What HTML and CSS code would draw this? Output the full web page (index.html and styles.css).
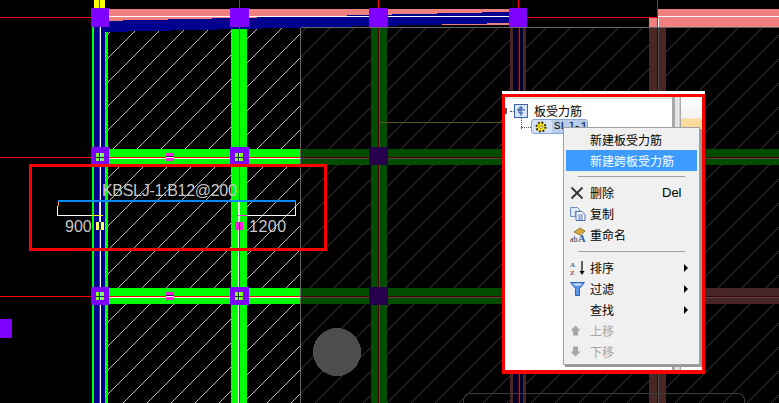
FILE: index.html
```html
<!DOCTYPE html>
<html lang="zh">
<head>
<meta charset="utf-8">
<title>板受力筋</title>
<link rel="stylesheet" href="styles.css">
</head>
<body>
<main class="stage">
  <svg class="cad" width="779" height="403" viewBox="0 0 779 403" xmlns="http://www.w3.org/2000/svg">
    <defs>
      <pattern id="hatch" patternUnits="userSpaceOnUse" x="-2" y="0" width="24" height="24">
        <line class="hatch-line" x1="0" y1="24" x2="24" y2="0"/>
      </pattern>
    </defs>
    <rect x="108" y="27" width="671" height="376" fill="url(#hatch)"/>

    <!-- rows -->
    <rect class="green" x="108" y="149" width="671" height="16"/>
    <rect class="green" x="108" y="288" width="402" height="16"/>
    <rect class="pink" x="510" y="288" width="269" height="16"/>

    <!-- columns -->
    <rect class="yellow" x="94" y="0" width="11" height="9"/>
    <rect class="green" x="92" y="27" width="2" height="376"/>
    <rect class="navy" x="94" y="27" width="11" height="376"/>
    <rect class="green" x="105" y="32" width="3" height="371"/>
    <rect class="green" x="231" y="27" width="16" height="376"/>
    <rect class="green" x="371" y="27" width="16" height="376"/>
    <rect class="pink" x="510" y="27" width="16" height="376"/>
    <rect class="navy" x="513" y="27" width="10" height="376"/>
    <rect class="pink" x="649" y="18" width="17" height="385"/>

    <!-- top band -->
    <rect class="pink" x="109" y="9" width="400" height="16"/>
    <polygon class="navy" points="105,20.900 509,11.900 509,23 105,32"/>
    <rect class="pink" x="657" y="9" width="122" height="18"/>

    <!-- axis lines -->
    <rect class="red" x="0" y="157" width="779" height="1"/>
    <rect class="white" x="108" y="158" width="671" height="1"/>
    <rect class="red" x="0" y="296" width="779" height="1"/>
    <rect class="white" x="108" y="297" width="671" height="1"/>
    <rect class="red" x="0" y="17" width="100" height="1"/>
    <rect class="red" x="527" y="17" width="131" height="1"/>
    <rect class="white" x="100" y="16" width="409" height="1"/>
    <rect class="white" x="657" y="16" width="122" height="1"/>
    <rect class="white" x="100" y="18" width="1" height="385"/>
    <rect class="red" x="99" y="0" width="1" height="403"/>
    <rect class="white" x="238" y="200" width="1" height="203"/>
    <rect class="red" x="239" y="0" width="1" height="403"/>
    <rect class="white" x="379" y="18" width="1" height="385"/>
    <rect class="red" x="378" y="0" width="1" height="403"/>
    <rect class="white" x="519" y="18" width="1" height="385"/>
    <rect class="red" x="518" y="0" width="1" height="403"/>
    <rect class="white" x="658" y="18" width="1" height="385"/>
    <rect class="red" x="657" y="0" width="1" height="403"/>

    <!-- nodes -->
    <rect class="purple" x="91" y="8" width="18" height="19"/>
    <rect class="purple" x="230" y="8" width="19" height="19"/>
    <rect class="purple" x="369" y="8" width="19" height="19"/>
    <rect class="purple" x="509" y="8" width="18" height="19"/>
    <rect class="purple" x="91" y="147" width="18" height="18"/>
    <rect class="purple" x="230" y="147" width="19" height="18"/>
    <rect class="purple" x="369" y="147" width="19" height="18"/>
    <rect class="purple" x="91" y="287" width="18" height="18"/>
    <rect class="purple" x="230" y="287" width="19" height="18"/>
    <rect class="purple" x="369" y="287" width="19" height="18"/>
    <rect class="purple" x="0" y="319" width="12" height="19"/>

    <g class="pin">
      <rect class="lime" x="96" y="153" width="8" height="8"/>
      <rect class="lime" x="235" y="153" width="8" height="8"/>
      <rect class="lime" x="96" y="292" width="8" height="8"/>
      <rect class="lime" x="235" y="292" width="8" height="8"/>
      <rect class="dark" x="99" y="153" width="1" height="8"/>
      <rect class="cyan" x="100" y="153" width="1" height="8"/>
      <rect class="dark" x="96" y="157" width="8" height="1"/>
      <rect class="dark" x="238" y="153" width="1" height="8"/>
      <rect class="cyan" x="239" y="153" width="1" height="8"/>
      <rect class="dark" x="235" y="157" width="8" height="1"/>
      <rect class="dark" x="99" y="292" width="1" height="8"/>
      <rect class="cyan" x="100" y="292" width="1" height="8"/>
      <rect class="dark" x="96" y="296" width="8" height="1"/>
      <rect class="dark" x="238" y="292" width="1" height="8"/>
      <rect class="cyan" x="239" y="292" width="1" height="8"/>
      <rect class="dark" x="235" y="296" width="8" height="1"/>
      <rect class="magenta" x="166" y="153" width="8" height="8"/>
      <rect class="magenta" x="166" y="292" width="8" height="8"/>
      <rect class="dark" x="166" y="156" width="8" height="1"/>
      <rect class="white" x="166" y="157" width="8" height="1"/>
      <rect class="dark" x="166" y="295" width="8" height="1"/>
      <rect class="white" x="166" y="296" width="8" height="1"/>
    </g>

    <!-- dimmed area -->
    <rect class="dim" x="300.5" y="27.5" width="500" height="400" rx="2"/>
    <rect class="olive" x="380" y="122" width="122" height="1"/>
    <circle class="disc" cx="337" cy="352" r="24"/>
    <rect class="ghost" x="463.5" y="393.5" width="281" height="30" rx="7"/>

    <!-- dimension -->
    <rect class="selection" x="30.5" y="165.5" width="295" height="84"/>
    <text class="dim-text tight" x="102" y="196">KBSLJ-1:B12@200</text>
    <rect class="wire" x="58" y="200" width="238" height="2"/>
    <rect class="orange" x="58" y="202" width="1" height="4"/>
    <rect class="orange" x="295" y="202" width="1" height="4"/>
    <rect class="white" x="57" y="206" width="1" height="10"/>
    <rect class="white" x="295" y="206" width="1" height="10"/>
    <rect class="white" x="57" y="215" width="40" height="1"/>
    <rect class="white" x="247" y="215" width="49" height="1"/>
    <rect class="yellow" x="92" y="215" width="11" height="1"/>
    <rect class="magenta" x="237" y="215" width="10" height="1"/>
    <rect class="cyan" x="99" y="202" width="1" height="20"/>
    <rect class="cyan" x="239" y="202" width="1" height="20"/>
    <rect class="yellow-pale" x="96" y="222" width="8" height="8"/>
    <rect class="dark" x="99" y="222" width="2" height="8"/>
    <rect class="magenta" x="235" y="222" width="8" height="8"/>
    <rect class="dark" x="239" y="222" width="1" height="8"/>
    <text class="dim-text" x="65" y="232">900</text>
    <text class="dim-text loose" x="249" y="232">1200</text>
  </svg>

  <section class="popup">
    <div class="frame">
      <div class="tree">
        <div class="node root">
          <span class="knob"></span>
          <span class="twig-h"></span>
          <svg class="tree-icon" width="14" height="14" viewBox="0 0 14 14">
            <rect x="0.5" y="0.5" width="13" height="13" fill="#d7e4f7" stroke="#3a62a8"/>
            <path d="M7 2v10M3 6h8M9 4H5v5h4" fill="none" stroke="#2a55a5"/>
          </svg>
          <span>板受力筋</span>
        </div>
        <span class="twig-v"></span>
        <div class="node child">
          <span class="twig-c"></span>
          <div class="pill">
            <svg class="gear" width="12" height="12" viewBox="0 0 12 12">
              <circle cx="6" cy="6" r="4.500" fill="#ffe600" stroke="#222" stroke-width="2" stroke-dasharray="1.800 1.730"/>
              <circle cx="6" cy="6" r="1.500" fill="#fff7a0" stroke="#554" stroke-width="0.600"/>
            </svg>
            <span class="pill-text">SLJ-1</span>
          </div>
        </div>
      </div>
      <div class="rail"></div>
      <div class="side"></div>
    </div>
  </section>

  <nav class="menu">
    <div class="item"><span class="ico"></span><span class="label">新建板受力筋</span></div>
    <div class="item active"><span class="ico"></span><span class="label">新建跨板受力筋</span></div>
    <div class="sep"></div>
    <div class="item">
      <span class="ico"><svg width="14" height="14" viewBox="0 0 14 14"><path d="M1.500 1.500l11 11M12.500 1.500l-11 11" fill="none" stroke="#333" stroke-width="1.800"/></svg></span>
      <span class="label">删除</span><span class="key">Del</span>
    </div>
    <div class="item">
      <span class="ico"><svg width="16" height="14" viewBox="0 0 16 14"><path d="M0.500 0.500h7l2 2v2h-4v5h-5z" fill="#dfe9f8" stroke="#6f8fc4"/><path d="M6 4.500h6l3 3v6H6z" fill="#fff" stroke="#4a6fb0"/><path d="M8 8h5M8 10h5M8 12h5" stroke="#4a6fb0"/></svg></span>
      <span class="label">复制</span>
    </div>
    <div class="item">
      <span class="ico"><svg width="16" height="16" viewBox="0 0 16 16"><path d="M4 5l6-4 5 3-5 4z" fill="#d9a93a" stroke="#8c7a45"/><text class="ab" x="0" y="15">ab</text><text class="big-a" x="8" y="15">A</text></svg></span>
      <span class="label">重命名</span>
    </div>
    <div class="sep wide"></div>
    <div class="item">
      <span class="ico"><svg width="16" height="16" viewBox="0 0 16 16"><text class="az a" x="0" y="6.500">A</text><text class="az z" x="0" y="15">Z</text><path d="M12 1v12" stroke="#000" stroke-width="1.200"/><path d="M9.500 11l2.500 4 2.500-4z" fill="#000"/></svg></span>
      <span class="label">排序</span><span class="gap"></span><span class="arrow"></span>
    </div>
    <div class="item">
      <span class="ico"><svg width="16" height="14" viewBox="0 0 16 14"><path d="M0.500 0.500h14l-5 6v7h-4v-7z" fill="#5b94e8" stroke="#2f63c0"/><path d="M3 1.500h9l-2 2H5z" fill="#d5e5fb"/></svg></span>
      <span class="label">过滤</span><span class="gap"></span><span class="arrow"></span>
    </div>
    <div class="item"><span class="ico"></span><span class="label">查找</span><span class="gap"></span><span class="arrow"></span></div>
    <div class="item off">
      <span class="ico"><svg width="11" height="11" viewBox="0 0 11 11"><path d="M5.500 0.500l5 5H8v5H3v-5H0.500z" fill="#a6a6a6"/></svg></span>
      <span class="label">上移</span>
    </div>
    <div class="item off">
      <span class="ico"><svg width="11" height="11" viewBox="0 0 11 11"><path d="M5.500 10.500l5-5H8v-5H3v5H0.500z" fill="#a6a6a6"/></svg></span>
      <span class="label">下移</span>
    </div>
  </nav>
</main>
</body>
</html>
```

FILE: styles.css
```css
* { box-sizing: border-box; }
html, body { margin: 0; padding: 0; background: #000; overflow: hidden; }

.stage {
  position: relative;
  width: 779px;
  height: 403px;
  overflow: hidden;
  background: #000;
  font-family: "Noto Sans CJK SC", "Liberation Sans", sans-serif;
  font-size: 12px;
}

/* CAD drawing */
.cad { display: block; shape-rendering: crispEdges; }
.hatch-line { stroke: #c4c4c4; stroke-width: 1; }
.green { fill: #00ff00; }
.pink { fill: #f08080; }
.navy { fill: #00008f; }
.yellow { fill: #ffff00; }
.yellow-pale { fill: #ffff66; }
.red { fill: #ff0000; }
.white { fill: #fff; }
.purple { fill: #7f00ff; }
.lime { fill: #80ff20; }
.dark { fill: #103040; }
.magenta { fill: #ff20e0; }
.cyan { fill: #a0f0ff; }
.orange { fill: #ff9900; }
.olive { fill: #55551a; }
.wire { fill: #0088ff; }
.dim { fill: rgba(0, 0, 0, 0.7); stroke: #666; stroke-width: 1; }
.disc { fill: #4d4d4d; }
.ghost { fill: none; stroke: #3c3c3c; stroke-width: 1; }
.selection { fill: none; stroke: #ff0000; stroke-width: 3; }
.dim-text {
  font-family: "Liberation Sans", sans-serif;
  font-size: 16px;
  fill: #c8c8c8;
  shape-rendering: auto;
}
.dim-text.tight { letter-spacing: -0.3px; }
.dim-text.loose { letter-spacing: 0.5px; }

/* Floating tree panel */
.popup {
  position: absolute;
  left: 502px;
  top: 91px;
  width: 203px;
  height: 283px;
  padding-top: 3px;
  background: #fff;
}
.frame {
  display: flex;
  height: 100%;
  border: solid #ff0000;
  border-width: 3px 3px 4px 3px;
  background: #fff;
}
.tree {
  position: relative;
  width: 167px;
  flex: none;
  padding-top: 2px;
  border-top: 2px solid #e4e4e4;
  color: #000;
}
.rail {
  width: 8px;
  flex: none;
  background: #e6e6e6;
  border-left: 3px solid #a8a8a8;
  border-right: 1px solid #d0d0d0;
}
.side {
  flex: 1;
  border-left: 1px solid #a8a8a8;
  background: linear-gradient(#fff 0, #f2f2f2 21px, #fbd99a 22px, #fbd99a 255px, #fff 256px);
}
.node { display: flex; align-items: center; position: relative; }
.root { height: 16px; margin-top: 2px; padding-left: 9px; gap: 6px; line-height: 16px; }
.child { height: 15px; padding-left: 26px; }
.tree-icon { flex: none; }
.knob {
  position: absolute;
  left: 0;
  top: 5px;
  width: 2px;
  height: 6px;
  background: #555;
}
.twig-h {
  position: absolute;
  left: 5px;
  top: 8px;
  width: 4px;
  border-top: 1px dotted #555;
}
.twig-v {
  position: absolute;
  left: 16px;
  top: 19px;
  height: 11px;
  border-left: 1px dotted #555;
}
.twig-c {
  position: absolute;
  left: 16px;
  top: 8px;
  width: 10px;
  border-top: 1px dotted #555;
}
.pill {
  display: flex;
  align-items: center;
  gap: 5px;
  width: 57px;
  height: 15px;
  padding-left: 3px;
  background: #d3e2f7;
  border: 1px solid #85a7d3;
  border-radius: 3px;
  overflow: hidden;
}
.gear { flex: none; }
.pill-text {
  background: #b9cde8;
  padding-left: 2px;
  flex: 1;
  line-height: 13px;
  white-space: nowrap;
  font-family: "Liberation Mono", monospace;
  font-size: 11px;
}

/* Context menu */
.menu {
  position: absolute;
  left: 563px;
  top: 127px;
  width: 137px;
  height: 238px;
  padding-top: 1px;
  background: #f0f0f0;
  border: 1px solid #a0a0a0;
  box-shadow: 2px 2px 0 #999;
  color: #000;
}
.item {
  display: flex;
  align-items: center;
  height: 21px;
  margin: 0 2px;
  padding-left: 3px;
  line-height: 21px;
  white-space: nowrap;
}
.item.active { background: #3d9bff; color: #fff; }
.item.off { color: #a6a6a6; }
.ico {
  flex: none;
  width: 21px;
  height: 21px;
  display: flex;
  align-items: center;
  justify-content: flex-start;
  padding-left: 1px;
}
.label { flex: none; width: 72px; }
.key {
  flex: none;
  font-family: "Liberation Sans", sans-serif;
  font-size: 13px;
}
.gap { flex: 1; }
.arrow {
  flex: none;
  width: 0;
  height: 0;
  margin-right: 9px;
  border-left: 4px solid #000;
  border-top: 4px solid transparent;
  border-bottom: 4px solid transparent;
}
.sep { height: 11px; padding-top: 5px; margin: 0 14px; }
.sep::before { content: ""; display: block; height: 1px; background: #a0a0a0; }
.sep.wide { height: 12px; padding-top: 6px; }

/* Small icon lettering */
.ab { font-family: "Liberation Serif", serif; font-size: 8px; fill: #333; }
.big-a { font-family: "Liberation Serif", serif; font-size: 10.500px; font-weight: bold; fill: #2a55a5; }
.az { font-family: "Liberation Serif", serif; font-size: 7px; font-weight: bold; }
.az.a { fill: #3d5fa8; }
.az.z { fill: #9c3a3a; }
```
